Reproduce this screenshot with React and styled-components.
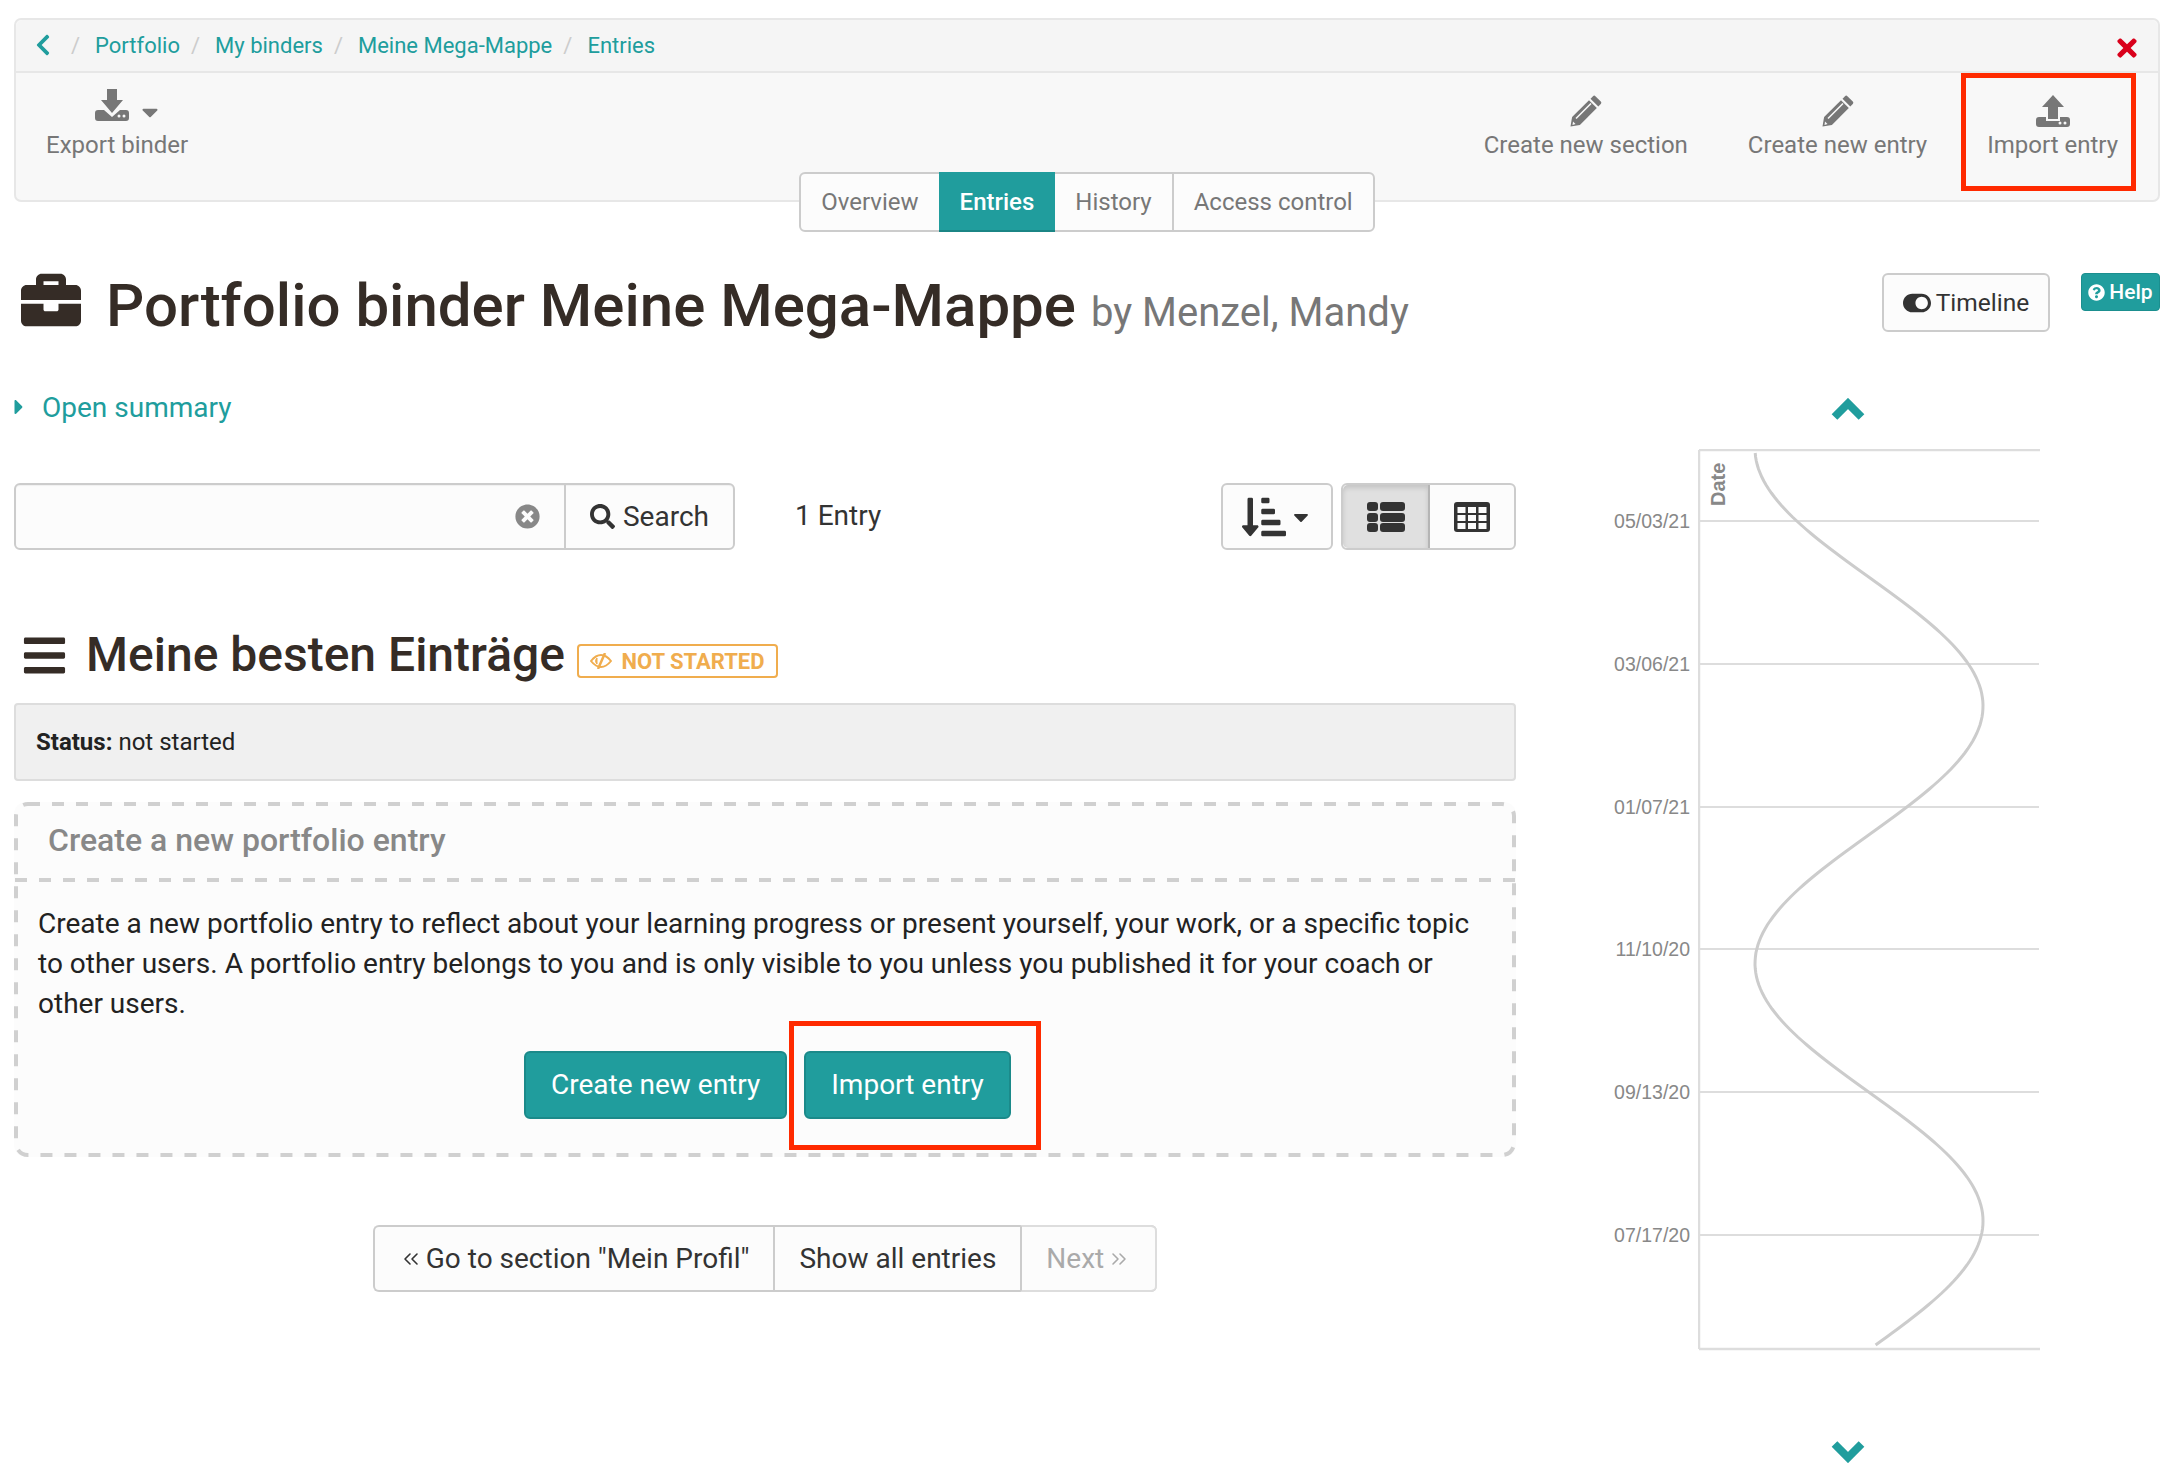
import React from "react";
import styled, { createGlobalStyle } from "styled-components";
import {
  FaChevronLeft, FaTimes, FaBriefcase, FaToggleOn,
  FaQuestionCircle, FaCaretRight, FaCaretDown, FaTimesCircle, FaSearch, FaSortAmountDownAlt,
  FaBars,
} from "react-icons/fa";
import { ChevronsLeft, ChevronsRight } from "lucide-react";

const TEAL = "#209d9d";
const INK = "#352c26";

const Global = createGlobalStyle`
  html, body { margin: 0; padding: 0; background: #fff; }
  body { font-family: Roboto, "Liberation Sans", sans-serif; font-size: 24px; color: #222; }
  * { box-sizing: border-box; }
`;

const Page = styled.div`
  padding: 18px 16px 0 14px;
  min-height: 1478px;
`;

const Panel = styled.div`
  border: 2px solid #e7e7e7;
  border-radius: 7px;
  background: #f8f8f8;
  height: 184px;
`;

const Crumbs = styled.nav`
  height: 53px;
  background: #f5f5f5;
  border-bottom: 2px solid #e7e7e7;
  border-radius: 7px 7px 0 0;
  display: flex;
  align-items: center;
  padding: 0 0 1px 15px;
  font-size: 22px;
`;

const Crumb = styled.a`
  color: ${TEAL};
`;

const Slash = styled.span`
  color: #ccc;
  margin: 0 15px 0 11px;
`;

const BackLink = styled.span`
  color: ${TEAL};
  display: flex;
  font-size: 24px;
  margin-right: 5px;
`;

const CloseLink = styled.span`
  color: #d9001b;
  display: flex;
  margin-left: auto;
  margin-right: 17px;
  margin-top: 5px;
  font-size: 28px;
`;

const Toolbar = styled.div`
  display: flex;
  justify-content: space-between;
  padding: 0 10px 0 0;
`;

const ToolGroup = styled.div`
  display: flex;
`;

const ToolItem = styled.div`
  position: relative;
  display: flex;
  flex-direction: column;
  align-items: center;
  padding: ${(p) => (p.$first ? "16px 30px 0 30px" : "22px 30px 0")};
  color: #777;
  font-size: 24px;
  svg { color: #777; }
`;

const ToolIcon = styled.div`
  height: ${(p) => (p.$first ? "39px" : "33px")};
  margin-left: ${(p) => (p.$first ? "24px" : "0")};
  display: flex;
  align-items: flex-start;
  gap: 8px;
`;

const ToolCaret = styled.span`
  display: flex;
  font-size: 26px;
  margin-top: 10px;
`;

const ToolLabel = styled.span`
  line-height: 34px;
`;

const Highlight = styled.div`
  position: absolute;
  border: ${(p) => p.$w}px solid #ff2a00;
  pointer-events: none;
`;

const TabsRow = styled.div`
  display: flex;
  justify-content: center;
  margin-top: -30px;
  height: 60px;
  position: relative;
`;

const Tabs = styled.div`
  display: flex;
  border: 2px solid #ccc;
  border-radius: 6px;
  background: #fcfcfc;
`;

const Tab = styled.div`
  display: flex;
  align-items: center;
  padding: 0 ${(p) => (p.$active ? "21px" : "20px")};
  font-size: 24px;
  color: ${(p) => (p.$active ? "#fff" : "#777")};
  background: ${(p) => (p.$active ? TEAL : "transparent")};
  font-weight: ${(p) => (p.$active ? 500 : 400)};
  border-left: ${(p) => (p.$sep ? "2px solid #ccc" : "none")};
  margin: ${(p) => (p.$active ? "-2px 0" : 0)};
  box-shadow: ${(p) => (p.$active ? "inset 0 -2px 0 #1b8585" : "none")};
`;

const TitleRow = styled.div`
  display: flex;
  align-items: flex-start;
  margin-top: 41px;
  height: 114px;
`;

const TitleIcon = styled.div`
  display: flex;
  color: ${INK};
  font-size: 60px;
  margin: -3px 25px 0 7px;
`;

const Title = styled.h1`
  margin: -2px 0 0;
  font-size: 60px;
  line-height: 70px;
  font-weight: 500;
  color: ${INK};
`;

const TitleBy = styled.small`
  font-size: 40px;
  font-weight: 400;
  color: #777;
  margin-left: 15px;
`;

const TimelineButton = styled.div`
  margin-left: auto;
  width: 168px;
  height: 59px;
  border: 2px solid #ccc;
  border-radius: 6px;
  background: #fcfcfc;
  display: flex;
  align-items: center;
  justify-content: center;
  gap: 5px;
  color: #333;
  font-size: 24.5px;
  svg { font-size: 28px; }
`;

const HelpBadge = styled.div`
  margin-left: 31px;
  width: 79px;
  height: 38px;
  border-radius: 4px;
  background: ${TEAL};
  border: 1px solid #1b8f8f;
  color: #fff;
  font-size: 21px;
  font-weight: 500;
  display: flex;
  align-items: center;
  justify-content: center;
  gap: 4px;
  svg { font-size: 17px; }
`;

const Columns = styled.div`
  display: grid;
  grid-template-columns: 1502px 1fr;
`;

const MainColumn = styled.main`
  min-width: 0;
`;

const Summary = styled.div`
  display: flex;
  align-items: center;
  height: 40px;
  color: ${TEAL};
  font-size: 28px;
  margin-bottom: 56px;
  svg { font-size: 24px; margin: 0 11px 0 -7px; }
`;

const SearchRow = styled.div`
  display: flex;
  align-items: center;
  height: 67px;
`;

const SearchGroup = styled.div`
  width: 721px;
  height: 67px;
  display: flex;
  border: 2px solid #ccc;
  border-radius: 6px;
  background: #fcfcfc;
  box-shadow: inset 0 1px 1px rgba(0, 0, 0, 0.05);
`;

const SearchField = styled.div`
  width: 548px;
  display: flex;
  align-items: center;
  justify-content: flex-end;
  padding-right: 24px;
  color: #888;
  font-size: 25px;
`;

const SearchButton = styled.div`
  flex: 1;
  border-left: 2px solid #ccc;
  display: flex;
  align-items: center;
  justify-content: center;
  gap: 8px;
  color: #333;
  font-size: 28px;
  svg { font-size: 25px; }
`;

const EntryCount = styled.div`
  margin-left: 60px;
  margin-top: -3px;
  font-size: 28px;
  color: #333;
`;

const ViewControls = styled.div`
  margin-left: auto;
  display: flex;
  gap: 8px;
`;

const IconButton = styled.div`
  height: 67px;
  width: ${(p) => p.$w}px;
  border: 2px solid #ccc;
  border-radius: 6px;
  background: #fcfcfc;
  display: flex;
  align-items: center;
  justify-content: center;
  gap: 3px;
  color: #333;
`;

const Segmented = styled.div`
  display: flex;
  height: 67px;
  border: 2px solid #ccc;
  border-radius: 6px;
  background: #fcfcfc;
`;

const Segment = styled.div`
  width: ${(p) => p.$w}px;
  display: flex;
  align-items: center;
  justify-content: center;
  color: #333;
  background: ${(p) => (p.$on ? "#e0e0e0" : "transparent")};
  box-shadow: ${(p) => (p.$on ? "inset 0 3px 5px rgba(0,0,0,.125)" : "none")};
  border-right: ${(p) => (p.$on ? "2px solid #b5b5b5" : "none")};
  border-radius: ${(p) => (p.$on ? "5px 0 0 5px" : "0")};
`;

const SectionHead = styled.div`
  display: flex;
  align-items: center;
  margin-top: 73px;
  height: 64px;
`;

const SectionBars = styled.div`
  display: flex;
  color: ${INK};
  font-size: 47px;
  margin: 0 18px 0 7px;
`;

const SectionTitle = styled.h2`
  margin: 0;
  font-size: 48px;
  font-weight: 500;
  color: ${INK};
  line-height: 60px;
`;

const StatusBadge = styled.span`
  margin-left: 12px;
  margin-top: 12px;
  height: 34px;
  width: 201px;
  border: 2px solid #f0ad4e;
  border-radius: 4px;
  color: #f0ad4e;
  font-size: 22px;
  font-weight: 700;
  display: flex;
  align-items: center;
  justify-content: center;
  gap: 9px;
`;

const StatusBox = styled.div`
  margin-top: 16px;
  height: 78px;
  background: #f0f0f0;
  border: 2px solid #ddd;
  border-radius: 4px;
  display: flex;
  align-items: center;
  padding-left: 20px;
  font-size: 24px;
  color: #222;
  b { font-weight: 700; margin-right: 6px; }
`;

const DashedBox = styled.section`
  position: relative;
  margin-top: 21px;
  height: 355px;
  border-radius: 12px;
  background: #fcfcfc;
`;

const DashedOutline = styled.svg`
  position: absolute;
  left: 0;
  top: 0;
  pointer-events: none;
`;

const DashedHead = styled.div`
  height: 76px;
  display: flex;
  align-items: center;
  padding-left: 34px;
  font-size: 32px;
  font-weight: 500;
  color: #888;
`;

const DashedRule = styled.div`
  height: 4px;
  background: repeating-linear-gradient(90deg, #d0d0d0 0 12px, transparent 12px 24px);
  background-position: 1px 0;
`;

const DashedBody = styled.div`
  padding: 22px 25px 0 24px;
  font-size: 28px;
  line-height: 40px;
  color: #222;
`;

const CtaRow = styled.div`
  display: flex;
  margin-top: 27px;
  gap: 17px;
  padding-left: 486px;
`;

const CtaWrap = styled.div`
  position: relative;
`;

const Cta = styled.div`
  height: 68px;
  padding: 0 25px;
  display: flex;
  align-items: center;
  background: ${TEAL};
  border: 2px solid #1b8a8a;
  border-radius: 6px;
  color: #fff;
  font-size: 28px;
`;

const PagerRow = styled.div`
  display: flex;
  justify-content: center;
  margin-top: 68px;
`;

const Pager = styled.div`
  display: flex;
  height: 67px;
  border: 2px solid #ccc;
  border-right: none;
  border-radius: 6px;
  background: #fcfcfc;
`;

const PagerItem = styled.div`
  display: flex;
  align-items: center;
  gap: 3px;
  padding: 0 24px;
  font-size: 28px;
  color: ${(p) => (p.$off ? "#aaa" : "#333")};
  border-left: ${(p) => (p.$sep ? "2px solid #ccc" : "none")};
  ${(p) => (p.$off
    ? `margin: -2px 0; border-top: 2px solid #ddd; border-bottom: 2px solid #ddd; border-right: 2px solid #ddd; border-radius: 0 6px 6px 0;`
    : `border-right: none;`)}
`;

const ChartColumn = styled.aside`
  display: flex;
  flex-direction: column;
  align-items: flex-start;
  padding-left: 67px;
`;

const Chevron = styled.svg`
  display: block;
  margin-left: 248px;
  margin-top: ${(p) => p.$mt}px;
`;

const ChartFrame = styled.div`
  position: relative;
  margin-top: 29px;
  margin-left: 115px;
`;

const ChartSvg = styled.svg`
  display: block;
`;

const TickLabel = styled.span`
  position: absolute;
  right: 353px;
  font-family: "Liberation Sans", sans-serif;
  font-size: 19.5px;
  line-height: 20px;
  color: #888;
  white-space: nowrap;
`;

function DownloadIcon() {
  return (
    <svg width="34" height="32" viewBox="0 0 34 32" fill="currentColor">
      <path d="M12 0h10v11h6L17 24 6 11h6z" />
      <path d="M0 24a3 3 0 0 1 3-3h6l8 7 8-7h6a3 3 0 0 1 3 3v5a3 3 0 0 1-3 3H3a3 3 0 0 1-3-3z" />
      <circle cx="24" cy="27" r="1.5" fill="#f8f8f8" />
      <circle cx="29" cy="27" r="1.5" fill="#f8f8f8" />
    </svg>
  );
}

function UploadIcon() {
  return (
    <svg width="34" height="32" viewBox="0 0 34 32" fill="currentColor">
      <path d="M17 0l11 12h-6v12H12V12H6z" />
      <path d="M0 25a3 3 0 0 1 3-3h7v4h14v-4h7a3 3 0 0 1 3 3v4a3 3 0 0 1-3 3H3a3 3 0 0 1-3-3z" />
      <circle cx="24" cy="28" r="1.5" fill="#f8f8f8" />
      <circle cx="29" cy="28" r="1.5" fill="#f8f8f8" />
    </svg>
  );
}

function PencilIcon() {
  return (
    <svg width="32" height="32" viewBox="0 0 32 32" fill="currentColor">
      <path d="M0.500 31.500L2.100 22.100 19 5.200 26.800 13 9.900 29.900z" />
      <path d="M20.500 3.700L23 1.200Q24.200 0 25.400 1.200L30.800 6.600Q32 7.800 30.800 9L28.300 11.500z" />
      <path d="M6 23.500L21 8.500" stroke="#f8f8f8" strokeWidth="1.600" />
      <path d="M3 26.500l2.500 2.500-3 1z" fill="#f8f8f8" />
    </svg>
  );
}

function EyeSlashIcon() {
  return (
    <svg width="22" height="16" viewBox="0 0 22 16" fill="none" stroke="currentColor">
      <path d="M1 8C5 3 8 2 11 2s6 1 10 6c-4 5-7 6-10 6S5 13 1 8z" strokeWidth="2" />
      <path d="M15 0L8 16" strokeWidth="2.500" />
      <path d="M7 5a4 4 0 0 0 0 6z" fill="currentColor" strokeWidth="1" />
    </svg>
  );
}

function ListIcon() {
  return (
    <svg width="38" height="30" viewBox="0 0 38 30" fill="currentColor">
      {[0, 11, 21].map((y) => (
        <g key={y}>
          <rect x="0" y={y} width="11" height="9" rx="3" />
          <rect x="13" y={y} width="25" height="9" rx="3" />
        </g>
      ))}
    </svg>
  );
}

function TableIcon() {
  return (
    <svg width="36" height="30" viewBox="0 0 36 30">
      <rect width="36" height="30" rx="3" fill="#333" />
      {[0, 1, 2].flatMap((r) =>
        [0, 1, 2].map((c) => (
          <rect key={`${r}${c}`} x={3.5 + c * 10.5} y={5 + r * 8} width="8" height="6" fill="#fcfcfc" />
        ))
      )}
    </svg>
  );
}

const TICKS = [
  ["05/03/21", 72],
  ["03/06/21", 215],
  ["01/07/21", 358],
  ["11/10/20", 500],
  ["09/13/20", 643],
  ["07/17/20", 786],
];

function curvePath() {
  const pts = [];
  for (let y = 4; y <= 899; y += 4) {
    const x = 171 - 114 * Math.cos((2 * Math.PI * (y + 0.5)) / 515);
    pts.push(`${x.toFixed(1)},${y}`);
  }
  return "M" + pts.join(" L");
}

function Chart() {
  return (
    <ChartSvg width="345" height="902" viewBox="0 0 345 902">
      <path d="M1 1V900M1 1H342M1 900H342" stroke="#ddd" strokeWidth="2.5" fill="none" />
      {TICKS.map(([label, y]) => (
        <line key={label} x1="2" x2="341" y1={y} y2={y} stroke="#ddd" strokeWidth="2" />
      ))}
      <path d={curvePath()} stroke="#ccc" strokeWidth="3" fill="none" />
      <text
        transform="translate(27 57) rotate(-90)"
        fontFamily="Liberation Sans"
        fontSize="20"
        fontWeight="700"
        fill="#888"
      >
        Date
      </text>
    </ChartSvg>
  );
}

export default function App() {
  return (
    <Page>
      <Global />
      <Panel>
        <Crumbs>
          <BackLink><FaChevronLeft /></BackLink>
          <Slash>/</Slash>
          <Crumb>Portfolio</Crumb>
          <Slash>/</Slash>
          <Crumb>My binders</Crumb>
          <Slash>/</Slash>
          <Crumb>Meine Mega-Mappe</Crumb>
          <Slash>/</Slash>
          <Crumb>Entries</Crumb>
          <CloseLink><FaTimes /></CloseLink>
        </Crumbs>
        <Toolbar>
          <ToolItem $first>
            <ToolIcon $first><DownloadIcon /><ToolCaret><FaCaretDown /></ToolCaret></ToolIcon>
            <ToolLabel>Export binder</ToolLabel>
          </ToolItem>
          <ToolGroup>
            <ToolItem>
              <ToolIcon><PencilIcon /></ToolIcon>
              <ToolLabel>Create new section</ToolLabel>
            </ToolItem>
            <ToolItem>
              <ToolIcon><PencilIcon /></ToolIcon>
              <ToolLabel>Create new entry</ToolLabel>
            </ToolItem>
            <ToolItem>
              <ToolIcon><UploadIcon /></ToolIcon>
              <ToolLabel>Import entry</ToolLabel>
              <Highlight $w={5} style={{ left: 4, right: 12, top: 0, bottom: -29 }} />
            </ToolItem>
          </ToolGroup>
        </Toolbar>
      </Panel>
      <TabsRow>
        <Tabs>
          <Tab>Overview</Tab>
          <Tab $active>Entries</Tab>
          <Tab>History</Tab>
          <Tab $sep>Access control</Tab>
        </Tabs>
      </TabsRow>
      <TitleRow>
        <TitleIcon><FaBriefcase /></TitleIcon>
        <Title>Portfolio binder Meine Mega-Mappe<TitleBy>by Menzel, Mandy</TitleBy></Title>
        <TimelineButton><FaToggleOn />Timeline</TimelineButton>
        <HelpBadge><FaQuestionCircle />Help</HelpBadge>
      </TitleRow>
      <Columns>
        <MainColumn>
          <Summary><FaCaretRight />Open summary</Summary>
          <SearchRow>
            <SearchGroup>
              <SearchField><FaTimesCircle /></SearchField>
              <SearchButton><FaSearch />Search</SearchButton>
            </SearchGroup>
            <EntryCount>1 Entry</EntryCount>
            <ViewControls>
              <IconButton $w={112}>
                <FaSortAmountDownAlt size={44} />
                <FaCaretDown size={24} />
              </IconButton>
              <Segmented>
                <Segment $on $w={87}><ListIcon /></Segment>
                <Segment $w={84}><TableIcon /></Segment>
              </Segmented>
            </ViewControls>
          </SearchRow>
          <SectionHead>
            <SectionBars><FaBars /></SectionBars>
            <SectionTitle>Meine besten Einträge</SectionTitle>
            <StatusBadge><EyeSlashIcon />NOT STARTED</StatusBadge>
          </SectionHead>
          <StatusBox><b>Status:</b> not started</StatusBox>
          <DashedBox>
            <DashedOutline width="1502" height="355" viewBox="0 0 1502 355">
              <rect x="2" y="2" width="1498" height="351" rx="12" fill="none" stroke="#d0d0d0" strokeWidth="4" strokeDasharray="12 12" />
            </DashedOutline>
            <DashedHead>Create a new portfolio entry</DashedHead>
            <DashedRule />
            <DashedBody>
              Create a new portfolio entry to reflect about your learning progress or present yourself, your work, or a specific topic to other users. A portfolio entry belongs to you and is only visible to you unless you published it for your coach or other users.
              <CtaRow>
                <Cta>Create new entry</Cta>
                <CtaWrap>
                  <Cta>Import entry</Cta>
                  <Highlight $w={5} style={{ left: -15, right: -30, top: -30, bottom: -31 }} />
                </CtaWrap>
              </CtaRow>
            </DashedBody>
          </DashedBox>
          <PagerRow>
            <Pager>
              <PagerItem><ChevronsLeft size={24} strokeWidth={1.6} />Go to section "Mein Profil"</PagerItem>
              <PagerItem $sep>Show all entries</PagerItem>
              <PagerItem $sep $off>Next<ChevronsRight size={24} strokeWidth={1.6} /></PagerItem>
            </Pager>
          </PagerRow>
        </MainColumn>
        <ChartColumn>
          <Chevron $mt={11} width="34" height="22" viewBox="0 0 34 22" fill="none" stroke={TEAL} strokeWidth="8">
            <path d="M3.500 19L17 5.500 30.500 19" />
          </Chevron>
          <ChartFrame>
            <Chart />
            {TICKS.map(([label, y]) => (
              <TickLabel key={label} style={{ top: y - 10 }}>{label}</TickLabel>
            ))}
          </ChartFrame>
          <Chevron $mt={90} width="34" height="22" viewBox="0 0 34 22" fill="none" stroke={TEAL} strokeWidth="8">
            <path d="M3.500 3L17 16.500 30.500 3" />
          </Chevron>
        </ChartColumn>
      </Columns>
    </Page>
  );
}
